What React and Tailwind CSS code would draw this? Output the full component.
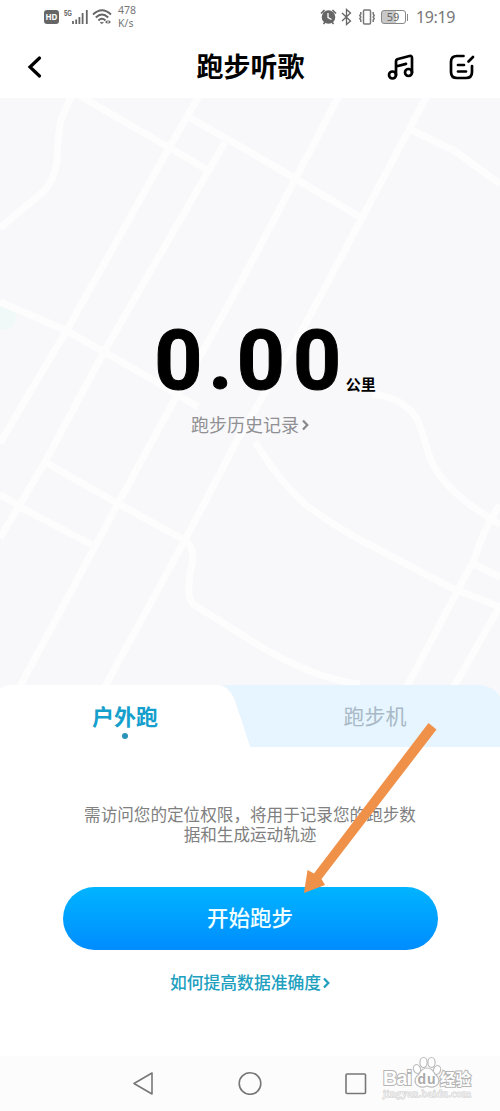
import React, { useState } from 'react';

const roads = [
  'M72 94 L61 120 Q57 140 57 160 Q55 180 43 192 L0 228',
  'M80 96 L208 170',
  'M200 94 L165 155 L67 330 L30 392 L0 443',
  'M185 115 L250 152 L360 217',
  'M225 142 L105 350 L45 462 L0 538',
  'M0 302 L65 330 L150 378 L198 407',
  'M340 94 L250 265 L208 342 L170 408 L120 500 L18 690',
  'M428 94 L305 325 L240 435 L185 540 L103 690',
  'M412 130 L455 151 L500 184',
  'M45 462 L115 502 L186 541 Q195 548 192 565 Q185 595 193 604 L250 640 Q310 678 360 684',
  'M0 494 L24 509 L92 545',
  'M255 442 Q278 480 306 505 Q340 530 370 545 L450 587 L500 607',
  'M372 394 Q407 398 419 423 L430 458 Q443 490 490 518 L500 525',
  'M500 505 Q485 525 474 560 L405 690',
  'M474 564 L500 577',
  'M500 606 L452 690',
];

const StatusBar = () => (
  <div className="flex h-9 items-end justify-between pr-[45px] pl-11 text-[#777]">
    <div className="flex h-[30px] items-start">
      <span className="mt-1 flex h-[14px] w-[15px] items-center justify-center rounded-[3px] bg-[#666] text-[8px] font-bold text-white">
        HD
      </span>
      <svg className="ml-[4px] h-6 w-[26px]" viewBox="0 0 26 24" fill="none">
        <text x="1" y="9.5" fontSize="9" fontWeight="bold" fill="#666" fontFamily="Liberation Sans" textLength="8" lengthAdjust="spacingAndGlyphs">5G</text>
        <path d="M10 18v-3M13.2 18v-4.5M16.4 18v-7M19.6 18V7M23.8 18V4" stroke="#666" strokeWidth="1.8" />
      </svg>
      <svg className="ml-[3px] h-6 w-5" viewBox="0 0 20 24" fill="none" stroke="#666" strokeWidth="1.9">
        <path d="M1 8.5Q10 0 19 8.5M3.8 11.5Q10 5.5 16.2 11.5M6.4 14.5Q10 11 13.4 14.5" />
        <path d="M8 16.3h3.5L9.8 18z" fill="#666" strokeWidth=".5" />
        <path d="M15.500 14l-2.500 2 2.500 2zM16.500 14l2.500 2-2.500 2z" fill="#666" stroke="none" />
      </svg>
      <span className="mt-[-2px] ml-[6px] text-[10.5px] leading-[13px]">
        478
        <br />
        K/s
      </span>
    </div>
    <div className="flex h-[29px] items-start">
      <svg className="h-5 w-[17px]" viewBox="0 0 17 20" fill="none" stroke="#666">
        <circle cx="8.5" cy="10" r="6.8" fill="#666" stroke="none" />
        <path d="M1 6.5L4.5 3M16 6.5L12.5 3M3.5 17l1.5-2M13.5 17L12 15" strokeWidth="1.6" />
        <path d="M8 6v4.5l3.5 2" stroke="white" strokeWidth="1.3" />
      </svg>
      <svg className="ml-[4px] h-5 w-[11px]" viewBox="0 0 11 20" fill="none" stroke="#666" strokeWidth="1.3">
        <path d="M1 6l8.5 8L5.5 17.5V2.5L9.5 6 1 14" />
      </svg>
      <svg className="ml-[5px] h-5 w-[20px]" viewBox="0 0 20 20" fill="none" stroke="#777" strokeWidth="1.5">
        <rect x="6.5" y="3" width="7" height="14" rx="1" />
        <path d="M3.8 5v2l-1 1.5 1 1.5-1 1.5 1 1.5v2M16.2 5v2l1 1.5-1 1.5 1 1.5-1 1.5v2" />
      </svg>
      <span className="mt-[3px] ml-[4px] flex h-[14px] w-[25px] items-center justify-center rounded-[3px] border border-[#888] bg-[linear-gradient(90deg,#c8c8c8_62%,#fff_62%)] text-[11px] text-[#666]">
        59
      </span>
      <span className="mt-[7px] ml-px h-[7px] w-[1.5px] bg-[#888]" />
      <span className="ml-[8px] text-[16px] leading-[20px] tracking-[-0.4px]">19:19</span>
    </div>
  </div>
);

const Header = () => (
  <div className="grid h-[62px] grid-cols-[1fr_auto_1fr] items-center pr-[25px] pl-[26px]">
    <svg className="h-6 w-[18px]" viewBox="0 0 18 24" fill="none" stroke="black" strokeWidth="3.2" strokeLinecap="round">
      <path d="M13.5 3L4 12l9.500 9" />
    </svg>
    <h1 className="text-[27px] leading-[30px] font-bold text-black">跑步听歌</h1>
    <div className="flex justify-end gap-[34px]">
      <svg className="h-7 w-7" viewBox="0 0 28 28" fill="none" stroke="black" strokeWidth="2.7">
        <circle cx="5.5" cy="22" r="3.5" />
        <circle cx="21.500" cy="19.500" r="3.500" />
        <path d="M9 22V8.500Q9 6.500 11 6L22.500 3Q25 2.500 25 5v14.500M9 13.500l10-2.600" strokeLinecap="round" />
      </svg>
      <svg className="h-7 w-[26px]" viewBox="0 0 26 28" fill="none" stroke="black" strokeWidth="2.7" strokeLinecap="round">
        <path d="M14.500 3H8Q2 3 2 9v10q0 6 6 6h9q6 0 6-6v-6" />
        <path d="M19.500 8.500L24 4M9 12h6M9 18.500h8" />
      </svg>
    </div>
  </div>
);

const RunMap = () => (
  <div className="relative h-[587px] bg-[#f8f8fa]">
    <svg className="absolute inset-0 h-full w-full" viewBox="0 98 500 587" fill="none">
      <circle cx="4" cy="318" r="12" fill="#f1f9f8" />
      {roads.map((d) => (
        <path key={d} d={d} stroke="#fdfdfe" strokeWidth="7" />
      ))}
    </svg>
    <div className="relative flex flex-col items-center pt-[218px]">
      <div className="ml-[30px] flex items-end text-black">
        <span className="flex h-[89px] font-[Roboto] text-[84px] leading-[89px] font-bold [-webkit-text-stroke:1px_black]">
          <span className="tracking-[5.6px]">0</span>
          <span className="tracking-[4.1px]">.</span>
          <span className="tracking-[8.3px]">00</span>
        </span>
        <span className="mb-[12px] ml-[-4px] text-[15px] leading-[18px] font-bold">公里</span>
      </div>
      <button className="mt-[8px] flex items-center text-[18px] leading-6 text-[#909094]">
        跑步历史记录
        <svg className="ml-[3px] h-3 w-[7px]" viewBox="0 0 7 12" fill="none" stroke="#88888c" strokeWidth="2.2">
          <path d="M1 1.500L5.300 6 1 10.500" />
        </svg>
      </button>
    </div>
  </div>
);

const Tabs = ({ tab, onChange }) => (
  <div className="relative flex h-[62px]">
    <svg className="absolute inset-0 h-full w-full" viewBox="0 0 500 62">
      <rect width="500" height="31" fill="#f8f8fa" />
      <path d="M220 0H480Q494 1 500 12V62H250L236 18Q231 2 220 0Z" fill="#e6f5ff" />
      <path d="M0 4Q4 0 12 0H218Q230 2 235 17L250 62H0Z" fill="#fff" />
    </svg>
    <button
      className="relative flex w-1/2 flex-col items-center pt-[18px] text-[22px] leading-[26px] font-bold text-[#159fcc]"
      onClick={() => onChange('outdoor')}
    >
      户外跑
      {tab === 'outdoor' && <span className="mt-1 h-[6px] w-[6px] rounded-full bg-[#2a94b8]" />}
    </button>
    <button
      className="relative flex w-1/2 justify-center pt-[18px] text-[21px] leading-[26px] text-[#a9b9c6]"
      onClick={() => onChange('treadmill')}
    >
      跑步机
    </button>
  </div>
);

const Watermark = () => (
  <svg className="absolute top-0 right-[20px] h-[54px] w-[102px]" viewBox="0 0 102 54">
    <g fill="#fff" stroke="#bdbdbd" strokeWidth="1.2">
      <ellipse cx="39" cy="13" rx="3.500" ry="4.500" transform="rotate(-20 39 13)" />
      <ellipse cx="45.500" cy="6.500" rx="3.600" ry="5" />
      <ellipse cx="53.500" cy="6.500" rx="3.600" ry="5" />
      <ellipse cx="59" cy="14" rx="3.500" ry="4.500" transform="rotate(20 59 14)" />
      <path d="M49 12Q54 12 57 18Q63 23 60 28Q56 33 49 30Q42 33 38 28Q35 23 41 18Q44 12 49 12Z" />
    </g>
    <g fontFamily="Liberation Sans" fontWeight="bold" fill="#fff" stroke="#b4b4b4" strokeWidth="2" paintOrder="stroke">
      <text x="5" y="29" fontSize="20" textLength="29">Bai</text>
      <text x="39.500" y="28" fontSize="14" textLength="18" fill="#aaa" stroke="none">du</text>
      <text x="62" y="29" fontSize="15.500" textLength="31" fontFamily="Noto Sans CJK SC">经验</text>
    </g>
    <text x="5" y="41" fontSize="11" fontFamily="Liberation Serif" fill="#f4f4f4" stroke="#cfcfcf" strokeWidth="1" paintOrder="stroke" textLength="88">
      jingyan.baidu.com
    </text>
  </svg>
);

const NavBar = () => (
  <div className="relative flex h-[55px] bg-[#fcfcfc] pt-[15px] pl-[132px]">
    <svg className="h-6 w-[236px]" viewBox="0 0 236 24" fill="none" stroke="#777" strokeWidth="1.600" strokeLinejoin="round">
      <path d="M2 12.500L20 2v21z" />
      <circle cx="118" cy="12.500" r="10.800" />
      <rect x="214" y="3" width="19.500" height="19.500" rx="1" />
    </svg>
    <Watermark />
  </div>
);

const App = () => {
  const [tab, setTab] = useState('outdoor');

  return (
    <div className="relative flex h-[1111px] w-[500px] flex-col overflow-hidden bg-white font-['Noto_Sans','Noto_Sans_CJK_SC',sans-serif]">
      <StatusBar />
      <Header />
      <RunMap />
      <Tabs tab={tab} onChange={setTab} />

      {/* Start panel */}
      <div className="flex flex-1 flex-col items-center">
        <p className="mt-[58px] text-center text-[16.600px] leading-5 text-[#808080]">
          需访问您的定位权限，将用于记录您的跑步数
          <br />
          据和生成运动轨迹
        </p>
        <button className="mt-[42px] flex h-[63px] w-[375px] items-center justify-center rounded-full bg-linear-to-b from-[#00b4ff] to-[#008cff] text-[21.500px] font-medium text-[#f0ffff]">
          开始跑步
        </button>
        <button className="mt-[21px] flex items-center text-[16.800px] leading-6 font-medium text-[#209fbf]">
          如何提高数据准确度
          <svg className="ml-[2px] h-3 w-[7px]" viewBox="0 0 7 12" fill="none" stroke="#209fbf" strokeWidth="2.300">
            <path d="M1 1.500L5.300 6 1 10.500" />
          </svg>
        </button>
      </div>
      <NavBar />

      {/* Pointer arrow */}
      <svg className="pointer-events-none absolute top-[715px] left-[295px] h-[185px] w-[150px]" viewBox="295 715 150 185">
        <path d="M428.500 723L436.500 729.500L321.500 879L325 885L304 893L307.500 870L314 873.500Z" fill="#f0914a" />
      </svg>
    </div>
  );
};

export default App;
